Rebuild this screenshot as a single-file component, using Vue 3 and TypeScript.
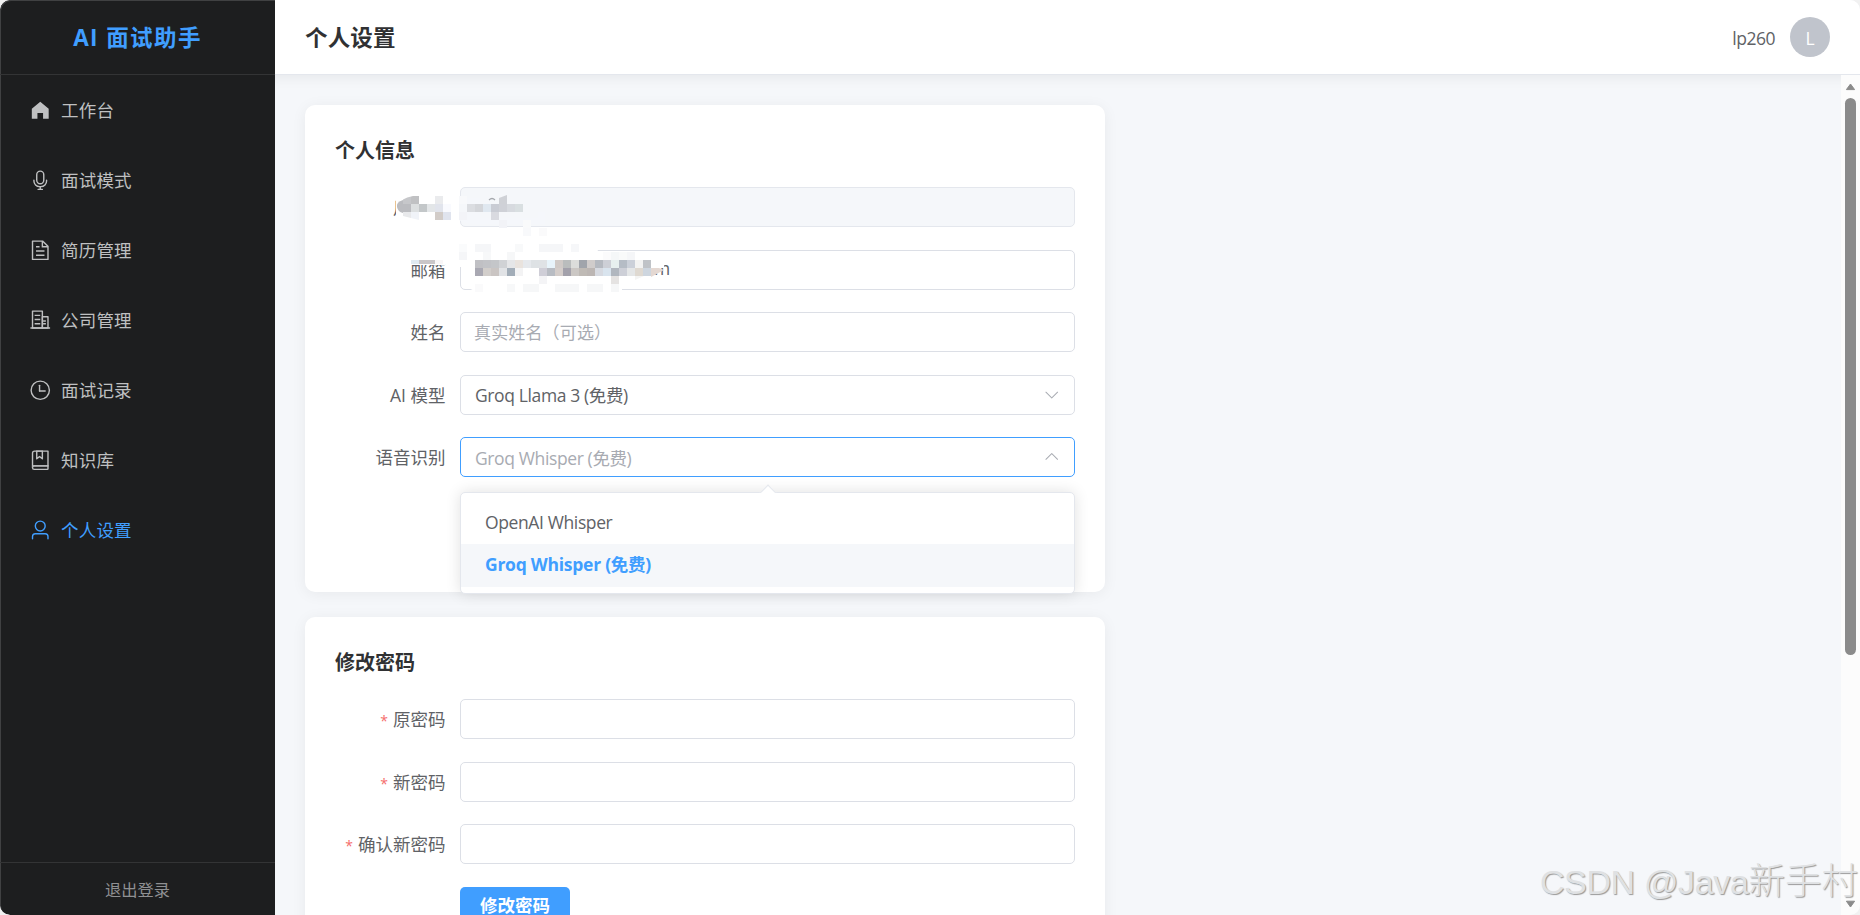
<script setup lang="ts">
import { ref } from 'vue'

interface MenuItem { label: string; paths: string[] }
interface Cell { x: number; y: number; w: number; h: number; fill: string }

const menu: MenuItem[] = [
  { label: '工作台', paths: ['M512 128 128 447.936V896h255.936V640H640v256h255.936V447.936z'] },
  { label: '面试模式', paths: ['M512 128a128 128 0 0 0-128 128v256a128 128 0 1 0 256 0V256a128 128 0 0 0-128-128m0-64a192 192 0 0 1 192 192v256a192 192 0 1 1-384 0V256A192 192 0 0 1 512 64m-32 832v-64a288 288 0 0 1-288-288v-32a32 32 0 0 1 64 0v32a224 224 0 0 0 224 224h64a224 224 0 0 0 224-224v-32a32 32 0 1 1 64 0v32a288 288 0 0 1-288 288v64h64a32 32 0 1 1 0 64H416a32 32 0 1 1 0-64z'] },
  { label: '简历管理', paths: ['M832 384H576V128H192v768h640zm-26.496-64L640 154.496V320zM160 64h480l256 256v608a32 32 0 0 1-32 32H160a32 32 0 0 1-32-32V96a32 32 0 0 1 32-32m160 448h384v64H320zm0-192h160v64H320zm0 384h384v64H320z'] },
  { label: '公司管理', paths: ['M192 128v704h384V128zm-32-64h448a32 32 0 0 1 32 32v768a32 32 0 0 1-32 32H160a32 32 0 0 1-32-32V96a32 32 0 0 1 32-32', 'M256 256h256v64H256zm0 192h256v64H256zm0 192h256v64H256zm384-128h128v64H640zm0 128h128v64H640zM64 832h896v64H64z', 'M640 384v448h192V384zm-32-64h256a32 32 0 0 1 32 32v512a32 32 0 0 1-32 32H608a32 32 0 0 1-32-32V352a32 32 0 0 1 32-32'] },
  { label: '面试记录', paths: ['M512 896a384 384 0 1 0 0-768 384 384 0 0 0 0 768m0 64a448 448 0 1 1 0-896 448 448 0 0 1 0 896', 'M480 256a32 32 0 0 1 32 32v256a32 32 0 0 1-64 0V288a32 32 0 0 1 32-32', 'M480 512h256q32 0 32 32t-32 32H480q-32 0-32-32t32-32'] },
  { label: '知识库', paths: ['M192 736h640V128H256a64 64 0 0 0-64 64zm64-672h608a32 32 0 0 1 32 32v672a32 32 0 0 1-32 32H160l-32 57.536V192A128 128 0 0 1 256 64', 'M240 800a48 48 0 1 0 0 96h592v-96zm0-64h656v160a64 64 0 0 1-64 64H240a112 112 0 0 1 0-224m144-608v250.88l96-76.8 96 76.8V128zm-64-64h320v381.44a32 32 0 0 1-51.968 24.96L480 384l-108.032 86.4A32 32 0 0 1 320 445.44z'] },
  { label: '个人设置', paths: ['M512 512a192 192 0 1 0 0-384 192 192 0 0 0 0 384m0 64a256 256 0 1 1 0-512 256 256 0 0 1 0 512m320 320v-96a96 96 0 0 0-96-96H288a96 96 0 0 0-96 96v96a32 32 0 1 1-64 0v-96a160 160 0 0 1 160-160h448a160 160 0 0 1 160 160v96a32 32 0 1 1-64 0'] },
]
const active = ref('个人设置')
const chevron = 'M831.872 340.864 512 652.672 192.128 340.864a30.59 30.59 0 0 0-42.752 0 29.12 29.12 0 0 0 0 41.6L489.664 714.24a32 32 0 0 0 44.672 0l340.288-331.712a29.12 29.12 0 0 0 0-41.728 30.59 30.59 0 0 0-42.752 0z'

const options = ['OpenAI Whisper', 'Groq Whisper (免费)']
const selected = ref('Groq Whisper (免费)')
const passwordFields = ['原密码', '新密码', '确认新密码']

// Privacy mask: 8px cells, each row given as [row, first column, colours]; '' leaves a cell clear.
const maskRows: [number, number, string[]][] = [
  [0, -1, ['#c6c7ca', '#c0c1c3', '', '', '#eaebed']],
  [1, -1, ['#bbbcc0', '#dcdfe0', '#c3c7c9', '#e3e6e8', '#e1e4ec', '#f9fafe']],
  [2, -1, ['#e8e9eb', '#f0f3f8', '', '', '#d2ccc8', '#e0e4ee']],
  [0, 6, ['#f8f9fb']],
  [1, 6, ['#f5f7fa', '#dbdde1', '#d4d6da', '#e0e8f0', '#c9ccd4', '#cfd1d7', '#d7dadf', '#d9dfe1']],
  [2, 6, ['#f3f4f8', '', '', '', '#d9dae0']],
  [3, 11, ['#f2f3f7', '', '', '#f9fafb']],
  [4, 14, ['#f8f9fb', '', '#fafafb']],
  [6, 6, ['#fafbfc', '', '#f5f6f8', '#f5f6f8', '', '', '', '#f8f9fa', '', '', '#f5f6f8', '#f5f6f8', '#f5f6f8', '', '#f6f7f9']],
  [7, 6, ['#f5f6f8', '', '', '#f7f8f9', '', '', '#f6f7f8']],
  [7, 24, ['#fbfbfc', '#f5f7f8', '#f9fafa', '#f5f6f8']],
  [8, 8, ['#c0c0c4', '#c2c3c7', '#c4c6c9', '#d0d2d5', '#e5e6e8', '#e9e3de', '#e6e9ed', '#dee2e5', '#dfe2e5', '#e8f4fb', '#d0cac7', '#babdbd', '#dcdddb', '#a0a4ab', '#d0cccb', '#b5b9c0', '#cdcfd6', '#e7f0ef', '#b5bcc5', '#cbd0d9', '#f3f3f2', '#c0c3c7']],
  [9, 8, ['#a9a8b2', '#d2cecb', '#cac5c3', '#e1e3e6', '#a2adb8', '#f3f3f4', '', '', '#cfced7', '#b8bcc3', '#d4cdca', '#a3a1ab', '#cbc7c4', '#bfbab5', '#bcb6b3', '#d7dae1', '#d9e4ee', '#b1b7bf', '#cdcfd7', '#e4e6e7', '#dfd9d1', '#ced6df']],
  [10, 16, ['#f4f4f6', '', '', '', '', '', '', '', '', '#e5e3e2']],
  [11, 8, ['#fafafb', '', '', '', '#f7f8f9', '', '#f6f7f8', '#f6f7f8', '', '', '#f6f7f8', '#f6f7f8', '#f6f7f8', '', '#f6f7f8', '#f6f7f8', '', '#f6f7f8']],
]
const cells: Cell[] = maskRows.flatMap(([row, col, fills]) =>
  fills.map((fill, i) => ({ x: 31 + (col + i) * 8, y: 16 + row * 8, w: 8, h: 8, fill })).filter((c) => c.fill),
)
</script>

<template>
  <div class="window">
    <aside class="sidebar">
      <div class="logo">AI 面试助手</div>
      <nav class="menu">
        <a v-for="item in menu" :key="item.label" class="menu-item" :class="{ active: item.label === active }">
          <span class="menu-icon">
            <svg viewBox="0 0 1024 1024"><path v-for="(d, i) in item.paths" :key="i" :d="d" /></svg>
          </span>
          <span class="menu-text">{{ item.label }}</span>
        </a>
      </nav>
      <div class="logout">退出登录</div>
    </aside>

    <section class="main">
      <header class="header">
        <h1>个人设置</h1>
        <div class="user"><span class="user-name">lp260</span><span class="avatar">L</span></div>
      </header>

      <div class="body">
        <div class="content">
          <section class="card profile">
            <h2>个人信息</h2>
            <div class="row">
              <label>用户名</label>
              <div class="input disabled"></div>
            </div>
            <div class="row">
              <label>邮箱</label>
              <div class="input email"><span>m</span></div>
            </div>
            <div class="row">
              <label>姓名</label>
              <div class="input placeholder">真实姓名（可选）</div>
            </div>
            <div class="row">
              <label>AI 模型</label>
              <div class="input select"><span>Groq Llama 3 (免费)</span>
                <svg class="chevron" viewBox="0 0 1024 1024"><path :d="chevron" /></svg>
              </div>
            </div>
            <div class="row">
              <label>语音识别</label>
              <div class="input select focus"><span>{{ selected }}</span>
                <svg class="chevron up" viewBox="0 0 1024 1024"><path :d="chevron" /></svg>
                <div class="popper">
                  <i class="popper-arrow"></i>
                  <div v-for="o in options" :key="o" class="option" :class="{ chosen: o === selected }">{{ o }}</div>
                </div>
              </div>
            </div>
            <svg class="mask" width="300" height="120" viewBox="0 0 300 120">
              <path fill="#fff" d="M20 14H74V42H20L16 34V20Z" />
              <path fill="#f5f7fb" d="M79 18H100V38H158V32H165V44H100Q84 44 79 40Z" />
              <path fill="#fff" d="M31 76H65V85H31ZM79 64H216L219 75V79H275V91L268 98H242V114H100Q90 108 84 107V87H79Z" />
              <g shape-rendering="crispEdges">
                <rect v-for="(c, i) in cells" :key="i" :x="c.x" :y="c.y" :width="c.w" :height="c.h" :fill="c.fill" />
                <rect x="31" y="80" width="8" height="4" fill="#e0eaf0" />
                <rect x="39" y="80" width="16" height="4" fill="#c9c6c8" />
                <rect x="55" y="80" width="8" height="4" fill="#f8f6f7" />
              </g>
              <path fill="#bbbcc0" d="M23 20Q16 22 17 27Q18 32 23 33Z" />
              <path fill="#fff" d="M22 14H33V16Q27 17 22 20ZM23 36L39 40H23Z" />
              <path fill="#cfd1d6" d="M119 24V18L127 15V24Z" />
              <path fill="#f4f4f3" d="M255 96H264L255 100Z" />
              <path fill="#fff" d="M271 84H284V88H271Z" />
              <path fill="#e4d8d2" d="M271 88H279L284 90L271 97Z" />
              <path d="M109 20Q112 17 115 20" fill="none" stroke="#a5a8ad" stroke-width="1.2" />
            </svg>
          </section>

          <section class="card">
            <h2>修改密码</h2>
            <div v-for="f in passwordFields" :key="f" class="row">
              <label><em>*</em>{{ f }}</label>
              <div class="input"></div>
            </div>
            <button class="primary">修改密码</button>
          </section>
        </div>
        <div class="scrollbar">
          <svg width="11" height="8" viewBox="0 0 11 8"><path d="M5.5 1 9.6 6.6H1.4Z" /></svg>
          <div class="thumb"></div>
          <svg class="down" width="11" height="8" viewBox="0 0 11 8"><path d="M5.5 7 1.4 1.2H9.6Z" /></svg>
        </div>
      </div>
    </section>
    <div class="watermark"><span>CSDN @Java</span>新手村</div>
  </div>
</template>

<style>
body {
  margin: 0;
  background: #f1f1f1;
  overflow: hidden;
}
</style>

<style scoped>
* {
  box-sizing: border-box;
}
.window {
  position: relative;
  display: flex;
  width: 1860px;
  height: 915px;
  border-radius: 10px;
  overflow: hidden;
  background: #f5f7fa;
  color: #606266;
  font: 17.5px "Open Sans", "Noto Sans CJK SC", sans-serif;
}
.sidebar {
  display: flex;
  flex-direction: column;
  width: 275px;
  flex: none;
  background: #1d1e1f;
  border-radius: 10px 0 0 10px;
  box-shadow: inset 1px 1px #404142;
}
.logo {
  height: 75px;
  border-bottom: 1px solid #333435;
  color: #409eff;
  font-size: 22.5px;
  font-weight: 700;
  letter-spacing: 1.4px;
  line-height: 75px;
  text-align: center;
}
.menu {
  flex: 1;
}
.menu-item {
  display: flex;
  align-items: center;
  height: 70px;
  padding-left: 25px;
  color: #bfc0c1;
}
.menu-item.active {
  color: #409eff;
}
.menu-icon {
  display: flex;
  justify-content: center;
  width: 30px;
  margin-right: 6px;
}
.menu-icon svg {
  width: 22.5px;
  height: 22.5px;
  fill: currentColor;
}
.menu-text {
  padding-bottom: 2px;
  letter-spacing: 0.2px;
}
.logout {
  height: 53px;
  border-top: 1px solid #333435;
  color: #8f9092;
  font-size: 16.25px;
  line-height: 54px;
  text-align: center;
}
.main {
  display: flex;
  flex: 1;
  flex-direction: column;
  min-width: 0;
}
.header {
  position: relative;
  z-index: 1;
  display: flex;
  flex: none;
  align-items: center;
  justify-content: space-between;
  height: 75px;
  padding: 0 30px;
  border-bottom: 1px solid #e4e7ed;
  background: #fff;
}
h1 {
  margin: 0 0 1px;
  color: #303133;
  font-size: 22.5px;
  font-weight: 700;
  letter-spacing: 0.15px;
}
.user {
  display: flex;
  align-items: center;
  gap: 15px;
}
.user-name {
  padding-top: 2px;
  letter-spacing: -0.5px;
}
.avatar {
  width: 40px;
  height: 40px;
  border-radius: 50%;
  background: #c0c4cc;
  color: #fff;
  line-height: 42px;
  text-align: center;
}
.body {
  display: flex;
  flex: 1;
  min-height: 0;
  box-shadow: inset 0 12px 14px -10px rgba(0, 0, 0, 0.07);
}
.content {
  display: flex;
  flex: 1;
  flex-direction: column;
  gap: 25px;
  padding: 30px;
  overflow: hidden;
}
.card {
  position: relative;
  flex: none;
  width: 800px;
  height: 487px;
  padding: 30px;
  border-radius: 10px;
  background: #fff;
  box-shadow: 0 2px 15px rgba(0, 0, 0, 0.06);
}
.profile {
  z-index: 1;
}
h2 {
  height: 52px;
  margin: 0;
  color: #303133;
  font-size: 20px;
  font-weight: 700;
  line-height: 31px;
}
.row {
  display: flex;
  height: 40px;
  margin-bottom: 22.5px;
}
label {
  width: 125px;
  padding-right: 14.5px;
  line-height: 41px;
  text-align: right;
  white-space: nowrap;
}
em {
  margin-right: 5px;
  color: #f56c6c;
  font-size: 14px;
  font-style: normal;
}
.input {
  position: relative;
  display: flex;
  flex: 1;
  align-items: center;
  justify-content: space-between;
  padding: 0 14px;
  border: 1px solid #dcdfe6;
  border-radius: 5px;
  background: #fff;
  letter-spacing: -0.38px;
}
.disabled {
  border-color: #e4e7ed;
  background: #f5f7fa;
}
.placeholder {
  padding: 0 13px 2px;
  color: #a8abb2;
  font-size: 17px;
  letter-spacing: 0.15px;
}
.focus {
  border-color: #409eff;
}
.focus > span {
  color: #a8abb2;
}
.email {
  padding: 0 0 3px 193px;
}
.chevron {
  width: 17.5px;
  height: 17.5px;
  fill: #a8abb2;
}
.up {
  transform: rotate(180deg);
}
.popper {
  position: absolute;
  top: 54px;
  left: -1px;
  width: 615px;
  height: 102px;
  padding: 8px 0;
  border: 1px solid #e4e7ed;
  border-radius: 5px;
  background: #fff;
  box-shadow: 0 0 15px rgba(0, 0, 0, 0.12);
}
.popper-arrow {
  position: absolute;
  top: -6px;
  left: 301px;
  width: 12px;
  height: 12px;
  border: 1px solid #e4e7ed;
  border-right-color: transparent;
  border-bottom-color: transparent;
  background: #fff;
  transform: rotate(45deg);
}
.option {
  position: relative;
  height: 43px;
  padding-left: 24px;
  line-height: 43px;
}
.chosen {
  color: #409eff;
  background: #f5f7fa;
  font-weight: 700;
  letter-spacing: -0.25px;
  line-height: 41px;
}
.mask {
  position: absolute;
  top: 75px;
  left: 75px;
}
.primary {
  display: block;
  width: 110px;
  height: 40px;
  margin-left: 125px;
  padding: 0 0 4px;
  border: 0;
  border-radius: 5px;
  background: #409eff;
  color: #fff;
  font: 700 17.5px/24px "Open Sans", "Noto Sans CJK SC", sans-serif;
}
.scrollbar {
  display: flex;
  flex-direction: column;
  align-items: center;
  width: 19px;
  padding: 8px 0 7px;
  background: #fcfcfc;
}
.scrollbar svg {
  flex: none;
  fill: #8b8b8b;
  stroke: #8b8b8b;
  stroke-linejoin: round;
}
.thumb {
  width: 11px;
  height: 557px;
  margin-top: 7px;
  border-radius: 6px;
  background: #8b8b8b;
}
.scrollbar .down {
  margin-top: auto;
}
.watermark {
  position: absolute;
  right: 2px;
  bottom: 9px;
  color: #dfe1e3;
  font: 36.5px/48px "Liberation Sans", "Noto Sans CJK SC", sans-serif;
  font-weight: 300;
  text-shadow: 1px 1px 1px #999;
  white-space: nowrap;
}
.watermark span {
  font-size: 34px;
  letter-spacing: -0.35px;
}
</style>
